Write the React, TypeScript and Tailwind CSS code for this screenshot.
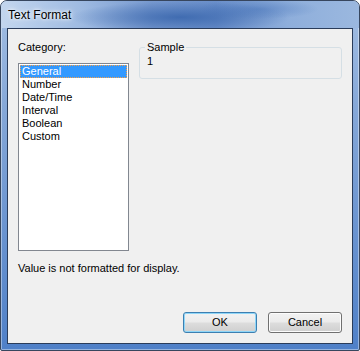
const CATEGORIES = ['General', 'Number', 'Date/Time', 'Interval', 'Boolean', 'Custom']

function Button({ label, isDefault }: { label: string; isDefault?: boolean }) {
  return (
    <button
      className={
        'w-[74px] h-[21px] rounded-[3px] border text-[11px] leading-[13px] text-black ' +
        'bg-[linear-gradient(to_bottom,#f2f2f2_0%,#ebebeb_48%,#dddddd_52%,#cfcfcf_100%)] ' +
        (isDefault
          ? 'border-[#3c7fb1] shadow-[inset_0_0_0_1px_#8fd6f8]'
          : 'border-[#707070] shadow-[inset_0_0_0_1px_#fcfcfc]')
      }
    >
      {label}
    </button>
  )
}

export default function App() {
  return (
    <div className="w-[360px] h-[351px] font-['Liberation_Sans',Arial,sans-serif]">
      <div className="w-full h-full flex flex-col rounded-t-[7px] rounded-b-[2px] border border-[#37465e] shadow-[inset_0_0_0_1px_rgba(255,255,255,0.4)] bg-[linear-gradient(to_bottom,#a4bfe3_0%,#86a8d8_30%,#4f80c8_100%)] overflow-hidden">
        {/* title bar */}
        <div className="h-[27px] flex-shrink-0 flex items-center pl-[7px] bg-[radial-gradient(ellipse_110px_16px_at_50%_60%,rgba(52,98,170,0.8),transparent),radial-gradient(ellipse_60px_10px_at_72%_30%,rgba(70,115,185,0.5),transparent),linear-gradient(to_right,#c3d6ee_0%,#9fbbe2_22%,#7799cf_42%,#6a8fca_60%,#8eaedb_80%,#9bb8df_100%)]">
          <span className="text-[12px] text-black [text-shadow:0_0_6px_#ffffff,0_0_3px_#ffffff]">Text Format</span>
        </div>

        <div className="flex-1 px-[6px] pb-[6px] flex">
          {/* client area */}
          <div className="flex-1 border border-[#2a3c5a] bg-[#f0f0f0] flex flex-col text-[11px] leading-[13px] text-black">
            <div className="flex pt-[12px] px-[10px]">
              <div className="flex flex-col">
                <div className="h-[13px]">Category:</div>
                <div className="mt-[9px] w-[111px] h-[188px] border border-[#828790] bg-white p-[1px]">
                  {CATEGORIES.map((c, i) => (
                    <div
                      key={c}
                      className={
                        i === 0
                          ? 'h-[13px] bg-[#3399ff] text-white border border-dotted border-[#f5a04a] pl-[1px] leading-[11px]'
                          : 'h-[13px] pl-[2px]'
                      }
                    >
                      {c}
                    </div>
                  ))}
                </div>
              </div>

              <fieldset className="ml-[10px] flex-1 h-[38px] border border-[#d5dfe5] rounded-[3px] pl-[5px] pb-[3px]">
                <legend className="px-[2px] leading-[13px]">Sample</legend>
                <div className="ml-[2px] mt-[1px]">1</div>
              </fieldset>
            </div>

            <div className="mt-[11px] px-[10px]">Value is not formatted for display.</div>

            <div className="mt-auto flex justify-end gap-[11px] pr-[10px] pb-[10px]">
              <Button label="OK" isDefault />
              <Button label="Cancel" />
            </div>
          </div>
        </div>
      </div>
    </div>
  )
}
